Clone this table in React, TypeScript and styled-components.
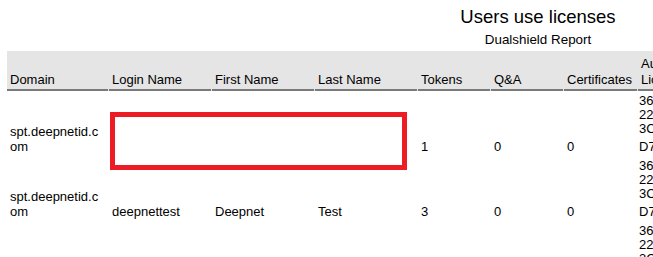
import React from "react";
import styled, { createGlobalStyle } from "styled-components";

const GlobalStyle = createGlobalStyle`
  html, body {
    margin: 0;
    padding: 0;
    overflow: hidden;
    background: #ffffff;
  }
  body {
    font-family: "Liberation Sans", Arial, sans-serif;
    color: #000000;
  }
`;

const COLUMNS = "101px 102px 102px 102px 72px 72px 73px 1fr";

const Page = styled.div`
  position: relative;
  width: 1062px;
  padding-left: 7px;
`;

const TitleBlock = styled.header`
  height: 51px;
  box-sizing: border-box;
  padding-top: 6px;
  display: flex;
  flex-direction: column;
  align-items: center;
  gap: 5px;
`;

const Title = styled.h1`
  margin: 0;
  font-size: 18.5px;
  line-height: 21px;
  font-weight: normal;
`;

const Subtitle = styled.h2`
  margin: 0;
  font-size: 13.4px;
  line-height: 16px;
  font-weight: normal;
`;

const HeaderRow = styled.div`
  display: grid;
  grid-template-columns: ${COLUMNS};
  column-gap: 1px;
  height: 40px;
  align-items: end;
  background: #e5e5e5;
`;

const HeaderCell = styled.div`
  font-size: 13px;
  line-height: 16px;
  padding: 0 4px 1px 3px;
  border-bottom: 2px solid #7a7a7a;
  white-space: nowrap;
`;

const Row = styled.div`
  display: grid;
  grid-template-columns: ${COLUMNS};
  column-gap: 1px;
  height: 65px;
  box-sizing: border-box;
  padding-bottom: 2px;
  align-items: end;
`;

const Cell = styled.div`
  font-size: 13px;
  line-height: 15px;
  padding: 0 6px 0 3px;
  overflow-wrap: anywhere;
`;

const KeyCell = styled.div`
  font-size: 13px;
  line-height: 14px;
  padding-left: 1px;
  display: flex;
  flex-direction: column;
  white-space: nowrap;
`;

const KeyLine = styled.span<{ $last?: boolean }>`
  margin-top: ${(p) => (p.$last ? "4px" : "0")};
`;

const Highlight = styled.div`
  position: absolute;
  left: 110px;
  top: 112px;
  width: 297px;
  height: 58px;
  box-sizing: border-box;
  border: 5px solid #ed1c24;
  pointer-events: none;
`;

type Entry = {
  domain: string;
  login: string;
  first: string;
  last: string;
  tokens: string;
  qa: string;
  certs: string;
  keys: string[];
};

const entries: Entry[] = [
  {
    domain: "spt.deepnetid.com",
    login: "",
    first: "",
    last: "",
    tokens: "1",
    qa: "0",
    certs: "0",
    keys: ["36A0F1C2", "22B94E07", "3C71D5A8", "D7E2048B"],
  },
  {
    domain: "spt.deepnetid.com",
    login: "deepnettest",
    first: "Deepnet",
    last: "Test",
    tokens: "3",
    qa: "0",
    certs: "0",
    keys: ["36A0F1C2", "22B94E07", "3C71D5A8", "D7E2048B"],
  },
  {
    domain: "spt.deepnetid.com",
    login: "",
    first: "",
    last: "",
    tokens: "1",
    qa: "0",
    certs: "0",
    keys: ["36A0F1C2", "22B94E07", "3C71D5A8", "D7E2048B"],
  },
];

export default function App() {
  return (
    <>
      <GlobalStyle />
      <Page>
        <TitleBlock>
          <Title>Users use licenses</Title>
          <Subtitle>Dualshield Report</Subtitle>
        </TitleBlock>
        <HeaderRow>
          <HeaderCell>Domain</HeaderCell>
          <HeaderCell>Login Name</HeaderCell>
          <HeaderCell>First Name</HeaderCell>
          <HeaderCell>Last Name</HeaderCell>
          <HeaderCell>Tokens</HeaderCell>
          <HeaderCell>Q&amp;A</HeaderCell>
          <HeaderCell>Certificates</HeaderCell>
          <HeaderCell>
            Authorized
            <br />
            Licenses
          </HeaderCell>
        </HeaderRow>
        {entries.map((e, i) => (
          <Row key={i}>
            <Cell>{e.domain}</Cell>
            <Cell>{e.login}</Cell>
            <Cell>{e.first}</Cell>
            <Cell>{e.last}</Cell>
            <Cell>{e.tokens}</Cell>
            <Cell>{e.qa}</Cell>
            <Cell>{e.certs}</Cell>
            <KeyCell>
              {e.keys.map((k, j) => (
                <KeyLine key={j} $last={j === e.keys.length - 1}>
                  {k}
                </KeyLine>
              ))}
            </KeyCell>
          </Row>
        ))}
        <Highlight />
      </Page>
    </>
  );
}
